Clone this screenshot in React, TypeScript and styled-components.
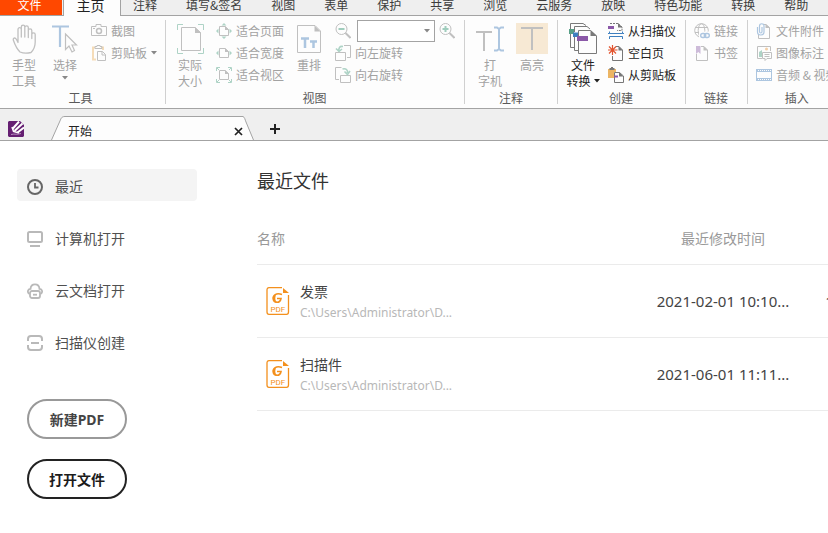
import React from "react";
import styled, { createGlobalStyle } from "styled-components";

const GRAY = "#c0c0c0";
const GREEN = "#aed3c6";
const BLUE = "#adc6e0";
const LINE = "#a3a3a3";

const GlobalStyle = createGlobalStyle`
  * { box-sizing: border-box; }
  body {
    margin: 0;
    background: #fff;
    overflow: hidden;
    font-family: "Noto Sans", "Noto Sans CJK SC", sans-serif;
  }
  button, select { font-family: inherit; margin: 0; padding: 0; }
  svg { display: block; flex: none; }
`;

const Page = styled.div`
  display: flex;
  flex-direction: column;
  min-height: 100vh;
  overflow: hidden;
`;

/* ---------- ribbon tabs ---------- */

const MenuBar = styled.nav`
  display: flex;
  align-items: flex-end;
  height: 16px;
  background: #efefef;
  border-bottom: 1px solid ${LINE};
  font-family: "Noto Sans CJK SC", sans-serif;
`;

const MenuTab = styled.button`
  flex: none;
  height: 20px;
  margin-left: 29px;
  border: 0;
  background: none;
  color: #3c3c3c;
  font-size: 12px;
  line-height: 20px;
  white-space: nowrap;
`;

const FileTab = styled(MenuTab)`
  width: 62px;
  margin-left: 0;
  padding-right: 3px;
  background: #ff4800;
  color: #fff;
`;

const HomeTab = styled(MenuTab)`
  width: 58px;
  height: 16px;
  margin: 0 -17px -1px 1px;
  border: solid ${LINE};
  border-width: 0 1px;
  background: #fdfdfd;
  color: #222;
  font-size: 14px;
  line-height: 10px;
  padding: 0 3px 6px 0;
`;

/* ---------- ribbon ---------- */

const Ribbon = styled.div`
  display: flex;
  height: 93px;
  padding-top: 4px;
  overflow: hidden;
  background: #fdfdfd;
  border-bottom: 1px solid ${LINE};
  font-family: "Noto Sans CJK SC", sans-serif;
  font-size: 12px;
`;

const Group = styled.section<{ $left?: number; $right?: number }>`
  flex: none;
  display: flex;
  flex-direction: column;
  padding-left: ${(p) => p.$left ?? 4}px;
  padding-right: ${(p) => p.$right ?? 9}px;
`;

const Divider = styled.div`
  flex: none;
  width: 1px;
  height: 84px;
  background: #d0d0d0;
`;

const GroupBody = styled.div`
  display: flex;
  height: 69px;
`;

const GroupLabel = styled.div<{ $indent?: number }>`
  padding-left: ${(p) => p.$indent ?? 0}px;
  line-height: 18px;
  text-align: center;
  color: #5a5a5a;
`;

const BigButton = styled.button<{ $wide?: boolean; $active?: boolean }>`
  width: ${(p) => (p.$wide ? 42 : 40)}px;
  display: flex;
  flex-direction: column;
  align-items: center;
  border: 0;
  background: none;
  color: ${(p) => (p.$active ? "#222" : "#a2a2a2")};
  font-size: 12px;
  line-height: 16px;
`;

const BigIcon = styled.span`
  display: flex;
  align-items: center;
  height: 37px;
`;

const TextLine = styled.span`
  display: flex;
  align-items: center;
  gap: 3px;
  min-height: 10px;
  white-space: nowrap;
`;

const Column = styled.div<{ $gap?: number }>`
  display: flex;
  flex-direction: column;
  margin-left: ${(p) => p.$gap ?? 0}px;
`;

const Row = styled.div`
  display: flex;
  align-items: center;
  height: 22px;
`;

const SmallButton = styled.button<{ $active?: boolean }>`
  display: flex;
  align-items: center;
  gap: 4px;
  height: 22px;
  border: 0;
  background: none;
  color: ${(p) => (p.$active ? "#222" : "#a2a2a2")};
  font-size: 12px;
  line-height: 22px;
  white-space: nowrap;
`;

const ZoomBox = styled.div`
  display: flex;
  align-items: center;
  width: 78px;
  height: 22px;
  margin: 0 4px 0 6px;
  padding-right: 4px;
  border: 1px solid ${LINE};
  background: #fff;
`;

const ZoomSelect = styled.select`
  appearance: none;
  flex: 1;
  min-width: 0;
  height: 20px;
  border: 0;
  background: none;
`;

/* ---------- document tabs ---------- */

const DocBar = styled.div`
  display: flex;
  align-items: flex-end;
  height: 32px;
  padding-left: 8px;
  background: #efefef;
  border-bottom: 1px solid ${LINE};
  font-family: "Noto Sans CJK SC", sans-serif;
`;

const Logo = styled.div`
  width: 43px;
  padding-bottom: 3px;
`;

const DocTab = styled.div`
  display: flex;
`;

const DocTabBody = styled.div`
  display: flex;
  align-items: center;
  justify-content: space-between;
  width: 178px;
  height: 24px;
  padding: 5px 0 0 3px;
  border-top: 1px solid ${LINE};
  background: #fdfdfd;
  color: #222;
  font-size: 12px;
  line-height: 16px;
`;

const IconButton = styled.button`
  display: flex;
  border: 0;
  background: none;
`;

const AddButton = styled(IconButton)`
  margin: 0 0 6px 16px;
`;

/* ---------- start page ---------- */

const Content = styled.div`
  flex: 1;
  display: flex;
  background: #fff;
`;

const Sidebar = styled.aside`
  flex: none;
  width: 257px;
  padding: 28px 60px 0 17px;
`;

const NavList = styled.nav`
  display: flex;
  flex-direction: column;
  gap: 20px;
`;

const NavItem = styled.a<{ $selected?: boolean }>`
  display: flex;
  align-items: center;
  gap: 12px;
  height: 32px;
  padding: 3px 10px 0;
  border-radius: 4px;
  background: ${(p) => (p.$selected ? "#f4f4f4" : "transparent")};
  color: #505050;
  font-size: 14px;
  line-height: 20px;
  text-decoration: none;
`;

const Actions = styled.div`
  display: flex;
  flex-direction: column;
  gap: 20px;
  margin: 42px 0 0 10px;
`;

const PillButton = styled.button<{ $strong?: boolean }>`
  width: 100px;
  height: 40px;
  border: 2px solid ${(p) => (p.$strong ? "#222" : "#999")};
  border-radius: 20px;
  background: #fff;
  color: ${(p) => (p.$strong ? "#1c1c1c" : "#444")};
  font-size: 14px;
  font-weight: 700;
`;

const Main = styled.main`
  flex: 1;
  min-width: 0;
  overflow: hidden;
`;

const Title = styled.h1`
  margin: 28px 0 0;
  color: #333;
  font-size: 18px;
  font-weight: 400;
  line-height: 24px;
`;

const FileTable = styled.table`
  width: 100%;
  min-width: 648px;
  margin-top: 20px;
  border-collapse: collapse;
  table-layout: fixed;
  font-size: 14px;
`;

const HeadCell = styled.th<{ $width?: number; $center?: boolean }>`
  width: ${(p) => (p.$width ? `${p.$width}px` : "auto")};
  height: 51px;
  padding: 0;
  border-bottom: 1px solid #ebebeb;
  color: #999;
  font-weight: 400;
  text-align: ${(p) => (p.$center ? "center" : "left")};
`;

const Cell = styled.td<{ $center?: boolean }>`
  height: 73px;
  padding: 0;
  border-bottom: 1px solid #ebebeb;
  color: #444;
  font-size: ${(p) => (p.$center ? 15 : 14)}px;
  text-align: ${(p) => (p.$center ? "center" : "left")};
`;

const FileInfo = styled.div`
  display: flex;
  align-items: center;
  gap: 10px;
  padding-left: 9px;
`;

const FileText = styled.div`
  padding-top: 2px;
`;

const FileName = styled.div`
  line-height: 22px;
`;

const FilePath = styled.div`
  color: #b8b8b8;
  font-size: 12px;
  line-height: 20px;
`;

/* ---------- icons ---------- */

const Caret = ({ color = "#888" }: { color?: string }) => (
  <svg width="6" height="4" viewBox="0 0 6 4"><path d="M0 0h6L3 3.5z" fill={color} /></svg>
);

const HandIcon = () => (
  <svg width="25" height="30" viewBox="0 0 25 30" fill="none" stroke={GRAY} strokeWidth="1.300" strokeLinejoin="round" strokeLinecap="round">
    <path d="M8 28C5 25 3 21 1.500 16.500 0.500 14 3 13 4.500 15.500L6 18.500V5.500C6 3 9.300 3 9.300 5.500V13V3C9.300 0.600 12.800 0.600 12.800 3V13V3.500C12.800 1.200 16.300 1.200 16.300 3.500V13.500V6.500C16.300 4.200 19.800 4.200 19.800 6.500V14.500V10.500C19.800 8.200 23.200 8.200 23.200 10.500V18C23.200 23 21.500 26 19 28.500 16 29.300 11 29.300 8 28Z" />
  </svg>
);

const SelectIcon = () => (
  <svg width="26" height="28" viewBox="0 0 26 28" fill="none">
    <path d="M0 1.500H17M8 1.500V22" stroke={BLUE} strokeWidth="2.200" />
    <path d="M13.500 9V24.500L17 21L20 27L22.500 25.500L20 20H24.500Z" fill="#fdfdfd" stroke={GRAY} strokeWidth="1.200" />
  </svg>
);

const CameraIcon = () => (
  <svg width="16" height="16" viewBox="0 0 16 16" fill="none" stroke={GRAY}>
    <path d="M0.500 3.500H5V1.500H10V3.500H15.500V12.500H0.500Z" /><circle cx="8" cy="8" r="2.500" strokeWidth="1.500" /><path d="M2 5.500h2" />
  </svg>
);

const PasteIcon = () => (
  <svg width="16" height="16" viewBox="0 0 16 16" fill="none">
    <path d="M4 2.500H2V14.500H5M10 2.500H12V5" stroke="#f5dcb8" strokeWidth="2" />
    <path d="M4 3.500V1.500H6V0.500H9V1.500H11V3.500Z" stroke={GRAY} />
    <path d="M6.500 6.500H11.500L14.500 9.500V15.500H6.500Z" fill="#fdfdfd" stroke={GRAY} /><path d="M11 6.500V10H14.500" stroke={GRAY} />
  </svg>
);

const ActualSizeIcon = () => (
  <svg width="27" height="30" viewBox="0 0 27 30" fill="none">
    <path d="M0.500 6V0.500H6M21 0.500H26.500V6M0.500 24V29.500H6M21 29.500H26.500V24" stroke={GREEN} />
    <path d="M4.500 3.500H18L23.500 8.500V26.500H4.500Z" stroke={GRAY} /><path d="M18 3V9H24Z" fill={GRAY} />
  </svg>
);

const FitIcon = ({ kind }: { kind: "page" | "width" | "view" }) => (
  <svg width="16" height="16" viewBox="0 0 16 16" fill="none">
    <path d="M3.500 3.500H9L12.500 6.500V12.500H3.500Z" stroke={GRAY} /><path d="M9 3V7H13Z" fill={GRAY} />
    {kind !== "view" && <path d="M2.500 5.500V10.500L0 8ZM13.500 5.500V10.500L16 8Z" fill={GREEN} />}
    {kind === "page" && <path d="M5.500 2.500H10.500L8 0ZM5.500 13.500H10.500L8 16Z" fill={GREEN} />}
    {kind === "view" && <path d="M0.500 4V0.500H4M1 1L3 3M12 0.500H15.500V4M15 1L13 3M0.500 12V15.500H4M1 15L3 13M12 15.500H15.500V12M15 15L13 13" stroke={GREEN} />}
  </svg>
);

const ReflowIcon = () => (
  <svg width="24" height="28" viewBox="0 0 24 28" fill="none">
    <path d="M0.500 0.500H18L23.500 6V27.500H0.500Z" stroke={GRAY} /><path d="M17.500 0.500V6.500H23.500Z" fill={GRAY} />
    <path d="M4 13.500H12M8 13.500V23M13 16.500H20M16.500 16.500V23" stroke={BLUE} strokeWidth="2.500" />
  </svg>
);

const ZoomIcon = ({ plus }: { plus?: boolean }) => (
  <svg width="16" height="16" viewBox="0 0 16 16" fill="none">
    <circle cx="6.500" cy="6" r="5.500" stroke={GRAY} /><path d="M10.500 10L15.500 15" stroke={GRAY} strokeWidth="2" />
    <path d={plus ? "M3.500 6H9.500M6.500 3V9" : "M3.500 6H9.500"} stroke="#a0cdbd" strokeWidth="2" />
  </svg>
);

const RotateLeftIcon = () => (
  <svg width="16" height="16" viewBox="0 0 16 16" fill="none">
    <path d="M9 0.500H15.500V12.500H12M0.500 7.500H10.500V15.500H0.500Z" stroke={GRAY} />
    <path d="M8 1.500C4.500 1 3.500 3 4 6M1 3.500L4 6.500L7 4" stroke={GREEN} strokeWidth="1.600" />
  </svg>
);

const RotateRightIcon = () => (
  <svg width="16" height="16" viewBox="0 0 16 16" fill="none">
    <path d="M6.500 0.500H0.500V12.500H4M5.500 8.500H15.500V15.500H5.500Z" stroke={GRAY} />
    <path d="M7.500 2C11 1 13 3 12.500 6M9.500 4.500L12.500 7.500L15 4" stroke={GREEN} strokeWidth="1.600" />
  </svg>
);

const TypewriterIcon = () => (
  <svg width="28" height="26" viewBox="0 0 28 26" fill="none">
    <path d="M0 6H16M8 6V25" stroke={GRAY} strokeWidth="2" />
    <path d="M23 2V24M18 1.500H21L23 3L25 1.500H28M18 24.500H21L23 23L25 24.500H28" stroke={BLUE} strokeWidth="2" />
  </svg>
);

const HighlightIcon = () => (
  <svg width="32" height="31" viewBox="0 0 32 31" fill="none">
    <path d="M0 0H32V31H0Z" fill="#f7e9d4" /><path d="M5 5H27M16 5V27" stroke={GRAY} strokeWidth="2" />
  </svg>
);

const ConvertIcon = () => (
  <svg width="28" height="31" viewBox="0 0 28 31" fill="none" stroke="#7a7a7a">
    <path d="M1.500 6V0.500H14L17 2.500M1.500 11V24.500H5" /><path d="M5.500 9V3.500H18L21 6M5.500 14V27.500H9" />
    <path d="M0 6H5V11H0Z" fill="#58a087" stroke="none" /><path d="M4 9.500H9V14H4Z" fill="#3f80c0" stroke="none" />
    <path d="M9.500 7.500H21.500L27.500 13V30.500H9.500Z" fill="#fdfdfd" /><path d="M21.500 7V13H28Z" fill="#7a7a7a" stroke="none" />
    <path d="M8 13H19V18H8Z" fill="#8b58a8" stroke="none" />
  </svg>
);

const ScannerIcon = () => (
  <svg width="16" height="16" viewBox="0 0 16 16" fill="none">
    <path d="M2 0.500H10L14 4V7.500H9" stroke="#777" strokeDasharray="2 1" /><path d="M10 0V4.500H14.500Z" fill="#777" />
    <path d="M0 3H6V6H0Z" fill="#8b58a8" /><path d="M1.500 8.500V10.500H14.500V8.500M1.500 16V13.500H14.500V16M0 10.500H1.500M14.500 10.500H16" stroke="#3d7fbf" />
  </svg>
);

const BlankPageIcon = () => (
  <svg width="16" height="16" viewBox="0 0 16 16" fill="none">
    <path d="M8 1.500H11L14.500 5V15.500H4.500V11" stroke="#777" /><path d="M10.500 1V5.500H15Z" fill="#777" />
    <path d="M4.500 0V10M0 5H9.500M1 1.500L8 8.500M8 1.500L1 8.500" stroke="#e2542f" strokeWidth="1.200" />
  </svg>
);

const FromClipboardIcon = () => (
  <svg width="16" height="16" viewBox="0 0 16 16" fill="none">
    <path d="M0 2H8V5H6V11H0Z" fill="#ecb564" /><path d="M1.500 3V1H3V0H5V1H6.500V3Z" fill="#777" />
    <path d="M6.500 5.500H11.500L15.500 9V15.500H6.500Z" fill="#fdfdfd" stroke="#777" /><path d="M11 5V9.500H15.500Z" fill="#777" /><path d="M6 8.500H10V10.500H6Z" fill="#8b58a8" />
  </svg>
);

const LinkIcon = () => (
  <svg width="16" height="16" viewBox="0 0 16 16" fill="none">
    <circle cx="7.500" cy="7.500" r="6.800" stroke={GRAY} /><ellipse cx="7.500" cy="7.500" rx="3.300" ry="6.800" stroke={GRAY} /><path d="M1 4.500H14M1 9.500H6" stroke={GRAY} />
    <path d="M5 8.500H16V16H5Z" fill="#fdfdfd" /><rect x="6.700" y="10.500" width="5" height="4" rx="2" stroke={BLUE} strokeWidth="1.400" /><rect x="10.300" y="10.500" width="5" height="4" rx="2" stroke={BLUE} strokeWidth="1.400" />
  </svg>
);

const BookmarkIcon = () => (
  <svg width="16" height="16" viewBox="0 0 16 16" fill="none">
    <path d="M7 1.500H10L13.500 5V15.500H2.500V9" stroke={GRAY} /><path d="M9.500 1V5.500H14Z" fill={GRAY} /><path d="M2 1H6.500V9L4.300 7L2 9Z" fill="#cdbbd9" />
  </svg>
);

const AttachIcon = () => (
  <svg width="16" height="16" viewBox="0 0 16 16" fill="none">
    <path d="M7 1.500H10L13.500 4.500V15.500H2.500V11" stroke={GRAY} /><path d="M9.500 1V5H14Z" fill={GRAY} />
    <path d="M1.500 4V9C1.500 13 8 13 8 9V3C8 0 3.500 0 3.500 3V8.500C3.500 10.500 6 10.500 6 8.500V4" stroke={BLUE} strokeWidth="1.200" />
  </svg>
);

const ImageNoteIcon = () => (
  <svg width="16" height="16" viewBox="0 0 16 16" fill="none">
    <path d="M6 13.500H1.500V1.500H14.500V6" stroke={GRAY} /><circle cx="10.500" cy="4" r="1.500" fill="#f3cfa6" /><path d="M3 12V7L6 5V12Z" fill={GREEN} />
    <path d="M6.500 7.500H15.500V13.500H11L9 15.500V13.500H6.500Z" fill="#fdfdfd" stroke={GRAY} /><path d="M8.500 9.500H13.500M8.500 11.500H13.500" stroke={GRAY} />
  </svg>
);

const FilmIcon = () => (
  <svg width="16" height="16" viewBox="0 0 16 16" fill="none" stroke={BLUE}>
    <path d="M0.500 2.500H15.500V13.500H0.500Z" /><path d="M0 3.500H16M0 12.500H16" strokeWidth="3" />
    <path d="M2 3.500H15M2 12.500H15" stroke="#fdfdfd" strokeDasharray="1 1" />
  </svg>
);

const AppLogo = () => (
  <svg width="16" height="16" viewBox="0 0 16 16" fill="none">
    <path d="M1 0H12L16 4V15L15 16H1L0 15V1Z" fill="#651f72" />
    <path d="M4 6L5.500 10.500L11 12" stroke="#fff" strokeWidth="1.500" />
    <path d="M4.500 8L11 0.500M6.500 10L14.500 2.500M9.500 11.500L16 6.500" stroke="#fff" strokeWidth="2" />
    <path d="M3 13.500C7 12.500 9 14 13 12.500" stroke="#c9a9cf" strokeWidth="0.800" />
  </svg>
);

const TabEdge = ({ right }: { right?: boolean }) => {
  const line = right ? "M0 0.500C1.500 1 2 3.500 3 6L10.500 24" : "M14 0.500C10 0.500 10 3 8.500 6L0.500 24";
  const width = right ? 11 : 14;
  return (
    <svg width={width} height="24" viewBox={`0 0 ${width} 24`} fill="none">
      <path d={`${line}H${right ? 0 : 14}Z`} fill="#fdfdfd" />
      <path d={line} stroke={LINE} />
    </svg>
  );
};

const CloseIcon = () => (
  <svg width="9" height="9" viewBox="0 0 9 9"><path d="M1 1L8 8M8 1L1 8" stroke="#222" strokeWidth="1.700" /></svg>
);

const PlusIcon = () => (
  <svg width="10" height="10" viewBox="0 0 10 10"><path d="M0 5H10M5 0V10" stroke="#222" strokeWidth="2" /></svg>
);

const ClockIcon = () => (
  <svg width="16" height="16" viewBox="0 0 16 16" fill="none" stroke="#666" strokeWidth="2"><circle cx="8" cy="8" r="7" /><path d="M8 4V8.500H11.500" strokeWidth="1.800" /></svg>
);

const ComputerIcon = () => (
  <svg width="16" height="16" viewBox="0 0 16 16" fill="none" stroke="#b9b9b9" strokeWidth="2"><rect x="1" y="1" width="14" height="10" rx="1.500" /><path d="M3 15H13" /></svg>
);

const CloudIcon = () => (
  <svg width="16" height="16" viewBox="0 0 16 16" fill="none" stroke="#b9b9b9" strokeWidth="1.800">
    <path d="M2.500 11C0 9.500 0.500 6 3.500 5.800C4 0 12 0 12.500 5.800C15.500 6 16 9.500 13.500 11" /><rect x="3" y="8" width="10" height="7" rx="2" /><path d="M6 11.700H10" />
  </svg>
);

const ScanIcon = () => (
  <svg width="16" height="16" viewBox="0 0 16 16" fill="none" stroke="#b9b9b9" strokeWidth="2">
    <path d="M1 6V4C1 2 2 1 4 1H12C14 1 15 2 15 4V6M1 10V12C1 14 2 15 4 15H12C14 15 15 14 15 12V10M4 8H12" />
  </svg>
);

const PdfIcon = () => (
  <svg width="24" height="28" viewBox="0 0 24 28" fill="none">
    <path d="M16 0.700H3C1.500 0.700 1 1.500 1 3V25C1 26.500 1.500 27.300 3 27.300H20.500C22 27.300 22.500 26.500 22.500 25V8" stroke="#f3901d" strokeWidth="1.300" />
    <path d="M17 1L23 6H17Z" fill="#f3901d" />
    <path d="M16 7.500C10 5.300 6.800 8.500 7.200 12C7.700 16 14 17 15 11.500H11" stroke="#f3901d" strokeWidth="1.600" />
    <path d="M7 9C6 14 9 16.500 12.500 15.800C9.500 15 8.500 12 10 8Z" fill="#f3901d" />
    <text x="11.800" y="25" textAnchor="middle" fontFamily="Roboto, sans-serif" fontSize="8" fill="#f3901d">PDF</text>
  </svg>
);

/* ---------- data ---------- */

const menus = ["注释", "填写&签名", "视图", "表单", "保护", "共享", "浏览", "云服务", "放映", "特色功能", "转换", "帮助"];

const places = [
  { label: "最近", icon: <ClockIcon /> },
  { label: "计算机打开", icon: <ComputerIcon /> },
  { label: "云文档打开", icon: <CloudIcon /> },
  { label: "扫描仪创建", icon: <ScanIcon /> },
];

const files = [
  { name: "发票", path: "C:\\Users\\Administrator\\D...", date: "2021-02-01 10:10...", size: "11.2 KB" },
  { name: "扫描件", path: "C:\\Users\\Administrator\\D...", date: "2021-06-01 11:11...", size: "1 MB" },
];

type ToolProps = { icon: React.ReactNode; label: string; active?: boolean; caret?: boolean };

const Tool = ({ icon, label, active, caret }: ToolProps) => (
  <SmallButton $active={active}>{icon}{label}{caret && <Caret />}</SmallButton>
);

type BigToolProps = { icon: React.ReactNode; lines: string[]; active?: boolean; wide?: boolean; caret?: boolean };

const BigTool = ({ icon, lines, active, wide, caret }: BigToolProps) => (
  <BigButton $active={active} $wide={wide}>
    <BigIcon>{icon}</BigIcon>
    {lines.map((line, i) => (
      <TextLine key={i}>{line}{caret && i === lines.length - 1 && <Caret color={active ? "#222" : "#888"} />}</TextLine>
    ))}
  </BigButton>
);

export default function App() {
  return (
    <Page>
      <GlobalStyle />
      <MenuBar>
        <FileTab>文件</FileTab>
        <HomeTab>主页</HomeTab>
        {menus.map((m) => <MenuTab key={m}>{m}</MenuTab>)}
      </MenuBar>

      <Ribbon>
        <Group $right={8}>
          <GroupBody>
            <BigTool icon={<HandIcon />} lines={["手型", "工具"]} />
            <BigTool wide icon={<SelectIcon />} lines={["选择", ""]} caret />
            <Column $gap={5}>
              <Tool icon={<CameraIcon />} label="截图" />
              <Tool icon={<PasteIcon />} label="剪贴板" caret />
            </Column>
          </GroupBody>
          <GroupLabel>工具</GroupLabel>
        </Group>
        <Divider />
        <Group>
          <GroupBody>
            <BigTool icon={<ActualSizeIcon />} lines={["实际", "大小"]} />
            <Column $gap={6}>
              <Tool icon={<FitIcon kind="page" />} label="适合页面" />
              <Tool icon={<FitIcon kind="width" />} label="适合宽度" />
              <Tool icon={<FitIcon kind="view" />} label="适合视区" />
            </Column>
            <Column $gap={5}><BigTool icon={<ReflowIcon />} lines={["重排"]} /></Column>
            <Column $gap={6}>
              <Row>
                <IconButton aria-label="缩小"><ZoomIcon /></IconButton>
                <ZoomBox>
                  <ZoomSelect aria-label="缩放比例" defaultValue=""><option value="" /></ZoomSelect>
                  <Caret />
                </ZoomBox>
                <IconButton aria-label="放大"><ZoomIcon plus /></IconButton>
              </Row>
              <Tool icon={<RotateLeftIcon />} label="向左旋转" />
              <Tool icon={<RotateRightIcon />} label="向右旋转" />
            </Column>
          </GroupBody>
          <GroupLabel $indent={4}>视图</GroupLabel>
        </Group>
        <Divider />
        <Group $right={4}>
          <GroupBody>
            <BigTool wide icon={<TypewriterIcon />} lines={["打", "字机"]} />
            <BigTool wide icon={<HighlightIcon />} lines={["高亮"]} />
          </GroupBody>
          <GroupLabel>注释</GroupLabel>
        </Group>
        <Divider />
        <Group>
          <GroupBody>
            <BigTool wide active icon={<ConvertIcon />} lines={["文件", "转换"]} caret />
            <Column $gap={4}>
              <Tool active icon={<ScannerIcon />} label="从扫描仪" />
              <Tool active icon={<BlankPageIcon />} label="空白页" />
              <Tool active icon={<FromClipboardIcon />} label="从剪贴板" />
            </Column>
          </GroupBody>
          <GroupLabel $indent={4}>创建</GroupLabel>
        </Group>
        <Divider />
        <Group $left={8}>
          <GroupBody>
            <Column>
              <Tool icon={<LinkIcon />} label="链接" />
              <Tool icon={<BookmarkIcon />} label="书签" />
            </Column>
          </GroupBody>
          <GroupLabel>链接</GroupLabel>
        </Group>
        <Divider />
        <Group $left={8}>
          <GroupBody>
            <Column>
              <Tool icon={<AttachIcon />} label="文件附件" />
              <Tool icon={<ImageNoteIcon />} label="图像标注" />
              <Tool icon={<FilmIcon />} label="音频 & 视频" />
            </Column>
          </GroupBody>
          <GroupLabel>插入</GroupLabel>
        </Group>
      </Ribbon>

      <DocBar>
        <Logo><AppLogo /></Logo>
        <DocTab>
          <TabEdge />
          <DocTabBody>
            开始
            <IconButton aria-label="关闭"><CloseIcon /></IconButton>
          </DocTabBody>
          <TabEdge right />
        </DocTab>
        <AddButton aria-label="新建标签"><PlusIcon /></AddButton>
      </DocBar>

      <Content>
        <Sidebar>
          <NavList>
            {places.map((p, i) => (
              <NavItem key={p.label} href="#" $selected={i === 0}>{p.icon}{p.label}</NavItem>
            ))}
          </NavList>
          <Actions>
            <PillButton>新建PDF</PillButton>
            <PillButton $strong>打开文件</PillButton>
          </Actions>
        </Sidebar>
        <Main>
          <Title>最近文件</Title>
          <FileTable>
            <thead>
              <tr>
                <HeadCell>名称</HeadCell>
                <HeadCell $width={150} $center>最近修改时间</HeadCell>
                <HeadCell $width={107} $center>大小</HeadCell>
              </tr>
            </thead>
            <tbody>
              {files.map((f) => (
                <tr key={f.name}>
                  <Cell>
                    <FileInfo>
                      <PdfIcon />
                      <FileText>
                        <FileName>{f.name}</FileName>
                        <FilePath>{f.path}</FilePath>
                      </FileText>
                    </FileInfo>
                  </Cell>
                  <Cell $center>{f.date}</Cell>
                  <Cell $center>{f.size}</Cell>
                </tr>
              ))}
            </tbody>
          </FileTable>
        </Main>
      </Content>
    </Page>
  );
}
